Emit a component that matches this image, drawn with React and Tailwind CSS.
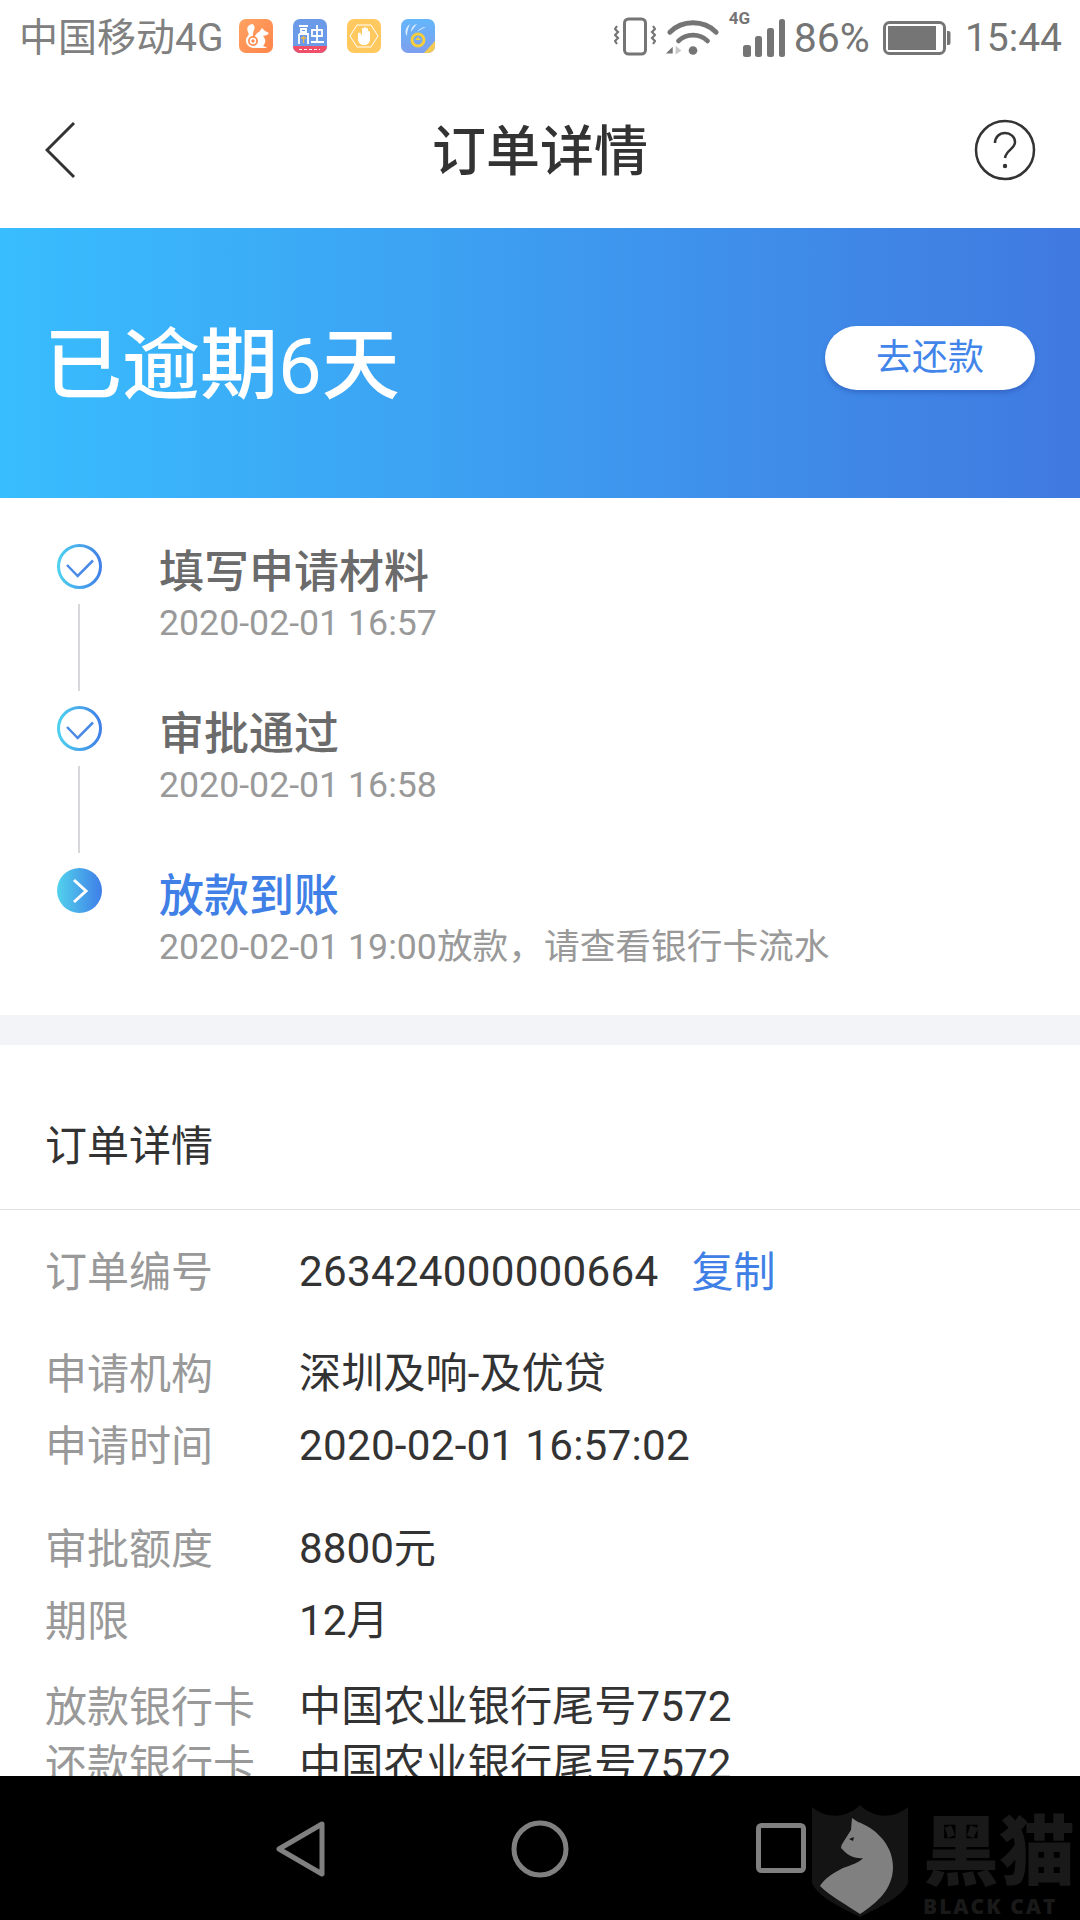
import React from "react";

const font = { fontFamily: '"Roboto", "Noto Sans CJK SC", sans-serif' };

const steps = [
  { title: "填写申请材料", time: "2020-02-01 16:57", done: true },
  { title: "审批通过", time: "2020-02-01 16:58", done: true },
  { title: "放款到账", time: "2020-02-01 19:00放款，请查看银行卡流水", done: false },
];

function UcIcon() {
  return (
    <svg width="34" height="34" viewBox="0 0 34 34">
      <defs>
        <linearGradient id="uc" x1="0" y1="0" x2="1" y2="1">
          <stop offset="0" stopColor="#ffa262" />
          <stop offset="1" stopColor="#ff8549" />
        </linearGradient>
      </defs>
      <rect width="34" height="34" rx="7" fill="url(#uc)" />
      <path d="M13 5c-4 1-6 4-4 8 1 2 1 3-1 5-3 4 0 10 6 11h14c-1-1-3-2-4-2 3-3 3-7 0-10l4-1 2-2-4-2-3-3-3 4c-3 1-4 4-5 6-2-2-1-5 0-8 1-2 1-5-2-6z" fill="#fff" />
      <circle cx="14" cy="22" r="5" fill="#ff8f52" />
      <circle cx="14" cy="22" r="2.500" fill="none" stroke="#fff" strokeWidth="1.500" />
    </svg>
  );
}

function LoanIcon() {
  return (
    <svg width="34" height="34" viewBox="0 0 34 34">
      <rect width="34" height="34" rx="7" fill="#6b9ae8" />
      <path d="M0 27h34a7 7 0 0 1-7 7H7a7 7 0 0 1-7-7z" fill="#ef4f68" />
      <path d="M6 7h9M8 10h5v3H8zM6 15h9v10M6 15v10M24 6v17M19 11h10v6H19zM18 23h13" fill="none" stroke="#fff" strokeWidth="1.800" />
      <path d="M8 19h5M10.500 17v7" stroke="#f2b64c" strokeWidth="1.300" />
      <path d="M6 30.500h21" stroke="#fff" strokeWidth="1.200" strokeDasharray="3 2" />
    </svg>
  );
}

function HandIcon() {
  return (
    <svg width="34" height="34" viewBox="0 0 34 34">
      <rect width="34" height="34" rx="7" fill="#ffc95f" />
      <path d="M10 6h14l7 11-7 11H10L3 17z" fill="none" stroke="#fff" strokeWidth="1" />
      <path d="M11 15v5c0 4 3 6 6 6s6-2 6-6v-7a1 1 0 0 0-2 0v3-6a1 1 0 0 0-2 0v5-6a1 1 0 0 0-2 0v6-5a1 1 0 0 0-2 0v7l-1-2a1 1 0 0 0-3 0z" fill="#fff" />
    </svg>
  );
}

function CoinIcon() {
  return (
    <svg width="34" height="34" viewBox="0 0 34 34">
      <defs>
        <linearGradient id="coin" x1="0" y1="0" x2="0" y2="1">
          <stop offset="0" stopColor="#64b6fb" />
          <stop offset="1" stopColor="#7d9fee" />
        </linearGradient>
      </defs>
      <rect width="34" height="34" rx="7" fill="url(#coin)" />
      <path d="M9 5c-4 3-6 8-3 12 0-4 1-8 3-12zM16 5c-4 1-6 4-6 8 2-3 4-6 6-8zM25 8c-4 0-7 2-9 5 3-2 6-4 9-5z" fill="#dcecff" />
      <circle cx="17" cy="21" r="6" fill="none" stroke="#f6cd3d" strokeWidth="3" />
      <path d="M17 18l3 3h-6z" fill="#f6cd3d" />
      <path d="M34 22v5a7 7 0 0 1-7 7h-4z" fill="#f4cb52" />
    </svg>
  );
}

function StatusBar() {
  return (
    <div className="h-[76px] flex items-center pl-[19px] text-[#808080] bg-white">
      <span className="w-[220px] shrink-0 whitespace-nowrap text-[39px] leading-[76px] -mt-[1px]">中国移动4G</span>
      <div className="flex items-center gap-[20px] -mt-[4px]">
        <UcIcon />
        <LoanIcon />
        <HandIcon />
        <CoinIcon />
      </div>
      <div className="ml-auto flex items-center pr-[18px] text-[#757575]">
        <svg width="42" height="40" viewBox="0 0 42 40" className="-mt-[3px]">
          <rect x="10.500" y="2" width="21" height="35" rx="4" fill="none" stroke="#757575" strokeWidth="3" />
          <path d="M3 9l-2 3 3 3-3 3 3 3-3 3 2 3M39 9l2 3-3 3 3 3-3 3 3 3-2 3" fill="none" stroke="#757575" strokeWidth="2.200" />
        </svg>
        <svg width="56" height="42" viewBox="0 0 58 42" className="ml-[9px] -mt-[3px]">
          <path d="M5 16C18 3 40 3 53 16M14 25c8-8 22-8 30 0" fill="none" stroke="#757575" strokeWidth="5" strokeLinecap="round" />
          <circle cx="29" cy="35" r="4.500" fill="#757575" />
          <path d="M1 38l7-7v7z" fill="#757575" />
          <path d="M11 30l6 5-6 4z" fill="#c8c8c8" />
        </svg>
        <div className="relative w-[58px] h-[56px] ml-[8px] -mt-[3px]">
          <span className="absolute left-0 top-[-1px] text-[17px] leading-[20px] font-bold">4G</span>
          <svg width="44" height="40" viewBox="0 0 44 40" className="absolute right-0 bottom-[6px]">
            <rect x="0" y="26" width="8" height="12" rx="2.500" fill="#757575" />
            <rect x="12" y="17" width="7" height="21" rx="2.500" fill="#757575" />
            <rect x="24" y="9" width="7" height="29" rx="2.500" fill="#757575" />
            <rect x="36" y="0" width="6" height="38" rx="2.500" fill="#757575" />
          </svg>
        </div>
        <span className="text-[41px] leading-[76px] ml-[7px] -mt-[1px]">86%</span>
        <svg width="68" height="34" viewBox="0 0 68 34" className="ml-[13px] -mt-[1px]">
          <rect x="1.500" y="1.500" width="60" height="31" rx="5" fill="none" stroke="#757575" strokeWidth="3" />
          <rect x="5" y="5" width="48" height="24" fill="#757575" />
          <path d="M64 10h1.500a2 2 0 0 1 2 2v10a2 2 0 0 1-2 2H64z" fill="#757575" />
        </svg>
        <span className="text-[39px] leading-[76px] ml-[14px] -mt-[1px]">15:44</span>
      </div>
    </div>
  );
}

function NavBar() {
  return (
    <div className="relative h-[152px] flex items-center justify-center bg-white">
      <svg width="32" height="60" viewBox="0 0 32 60" className="absolute left-[45px] top-[44px]">
        <path d="M29 3L2 30l27 27" fill="none" stroke="#333" strokeWidth="3" />
      </svg>
      <span className="text-[54px] font-medium text-[#333] leading-[60px] mt-[2px]">订单详情</span>
      <svg width="62" height="62" viewBox="0 0 62 62" className="absolute right-[44px] top-[43px]">
        <circle cx="31" cy="31" r="29" fill="none" stroke="#333" strokeWidth="2.500" />
        <path d="M21 24c0-6 4.500-10 10-10s10 4 10 9c0 7-9 8-10 16" fill="none" stroke="#333" strokeWidth="2.500" />
        <circle cx="31" cy="47" r="2.200" fill="#333" />
      </svg>
    </div>
  );
}

function Banner() {
  return (
    <div className="relative h-[270px] flex items-center justify-between pl-[44px] pr-[45px] bg-gradient-to-r from-[#38bdfe] to-[#4079e0]">
      <span className="text-[78px] font-medium text-white leading-[90px] mt-[8px]">
        已逾期<span className="font-normal">6</span>天
      </span>
      <button className="w-[210px] h-[64px] -mt-[11px] rounded-full bg-white text-[#4285ea] text-[36px] leading-[64px] shadow-[0_3px_4px_rgba(40,80,170,0.45)]">
        去还款
      </button>
    </div>
  );
}

function StepIcon({ done }) {
  if (done) {
    return (
      <svg width="45" height="45" viewBox="0 0 45 45" className="block">
        <defs>
          <linearGradient id="ring" x1="0" y1="0" x2="1" y2="0">
            <stop offset="0" stopColor="#4fd0ee" />
            <stop offset="1" stopColor="#4080e8" />
          </linearGradient>
        </defs>
        <circle cx="22.500" cy="22.500" r="21" fill="none" stroke="url(#ring)" strokeWidth="3" />
        <path d="M10 21l10.700 11 15.300-15.500" fill="none" stroke="#4a8ae6" strokeWidth="2.500" />
      </svg>
    );
  }
  return (
    <svg width="45" height="45" viewBox="0 0 45 45" className="block">
      <defs>
        <linearGradient id="dot" x1="0" y1="0" x2="1" y2="0">
          <stop offset="0" stopColor="#52d2ec" />
          <stop offset="1" stopColor="#3f7ee8" />
        </linearGradient>
      </defs>
      <circle cx="22.500" cy="22.500" r="22.500" fill="url(#dot)" />
      <path d="M17 12l12 11-12 11" fill="none" stroke="#fff" strokeWidth="3" />
    </svg>
  );
}

function Timeline() {
  return (
    <div className="h-[517px] pt-[46px] pl-[57px] bg-white">
      {steps.map((s) => (
        <div key={s.title} className="flex h-[162px]">
          <div className="w-[45px] shrink-0">
            <StepIcon done={s.done} />
            {s.done && <div className="w-[2px] h-[87px] mt-[15px] ml-[21px] bg-[#d8d8dc]" />}
          </div>
          <div className="ml-[57px]">
            <div className={`text-[45px] font-medium leading-[52px] mt-[3px] ${s.done ? "text-[#6b6b6b]" : "text-[#4080e6]"}`}>{s.title}</div>
            <div className="text-[35.700px] leading-[40px] mt-[4px] text-[#999]">{s.time}</div>
          </div>
        </div>
      ))}
    </div>
  );
}

function Row({ label, value, className, valueClass = "", children }) {
  return (
    <div className={`flex items-center ${className}`}>
      <span className="w-[254px] text-[42px] text-[#999] shrink-0">{label}</span>
      <span className={`text-[42.200px] text-[#333] ${valueClass}`}>{value}</span>
      {children}
    </div>
  );
}

function Details() {
  return (
    <div className="bg-white">
      <div className="h-[165px] border-b border-[#e0e0e0] flex items-end pl-[45px] pb-[34px]">
        <span className="text-[42px] leading-[56px] text-[#333]">订单详情</span>
      </div>
      <div className="pl-[45px] pt-[26px] whitespace-nowrap">
        <Row label="订单编号" value="263424000000664" valueClass="tracking-[0.25px]" className="h-[72px]">
          <span className="ml-[33px] text-[42px] text-[#4080e6]">复制</span>
        </Row>
        <Row label="申请机构" value="深圳及响-及优贷" className="h-[72px] mt-[30px]" />
        <Row label="申请时间" value="2020-02-01 16:57:02" valueClass="tracking-[0.25px]" className="h-[72px]" />
        <Row label="审批额度" value="8800元" className="h-[72px] mt-[31px]" />
        <Row label="期限" value="12月" className="h-[72px]" />
        <Row label="放款银行卡" value="中国农业银行尾号7572" className="h-[58px] mt-[21px]" />
        <Row label="还款银行卡" value="中国农业银行尾号7572" className="h-[58px]" />
      </div>
    </div>
  );
}

function Watermark() {
  return (
    <div className="absolute left-[811px] top-[1805px] w-[269px] h-[112px] flex">
      <svg width="98" height="112" viewBox="0 0 98 112" className="shrink-0">
        <path d="M1 2C15 14 35 14 49 0c14 14 34 14 48 2v76c-6 14-28 24-48 34C29 102 7 92 1 78z" fill="#141414" />
        <path d="M41 13l6 4c15 5 35 21 35 45 0 22-16 36-33 47C36 100 20 92 9 81c4-7 13-13 23-18 8-3 16-5 20-10-6 1-14-2-18-6l-4-4q0-3 3-7l7-11z" fill="#808080" />
        <path d="M38 34l5-2-1 4z" fill="#141414" />
      </svg>
      <div className="ml-[14px] flex flex-col text-[#191919] font-black whitespace-nowrap">
        <span className="text-[76px] leading-[76px] mt-[10px]">黑猫</span>
        <span className="text-[21px] leading-[24px] mt-[3px] tracking-[2px]" style={{ fontFamily: '"Open Sans", sans-serif' }}>
          BLACK CAT
        </span>
      </div>
    </div>
  );
}

function BottomBar() {
  return (
    <div className="h-[144px] shrink-0 bg-black flex items-start pt-[44px] pl-[276px]">
      <svg width="50" height="58" viewBox="0 0 50 58">
        <path d="M46 4L3 29l43 25z" fill="none" stroke="#808080" strokeWidth="5" strokeLinejoin="round" />
      </svg>
      <svg width="58" height="58" viewBox="0 0 58 58" className="ml-[185px]">
        <circle cx="29" cy="29" r="26" fill="none" stroke="#808080" strokeWidth="5" />
      </svg>
      <svg width="50" height="50" viewBox="0 0 50 50" className="ml-[187px] mt-[3px]">
        <rect x="2.500" y="2.500" width="45" height="45" rx="3" fill="none" stroke="#808080" strokeWidth="5" />
      </svg>
    </div>
  );
}

export default function App() {
  return (
    <div className="relative w-[1080px] h-[1920px] flex flex-col overflow-hidden bg-white" style={font}>
      <div className="flex-1 min-h-0 overflow-hidden">
        <StatusBar />
        <NavBar />
        <Banner />
        <Timeline />
        <div className="h-[30px] bg-[#f3f4f8]" />
        <Details />
      </div>
      <BottomBar />
      <Watermark />
    </div>
  );
}
